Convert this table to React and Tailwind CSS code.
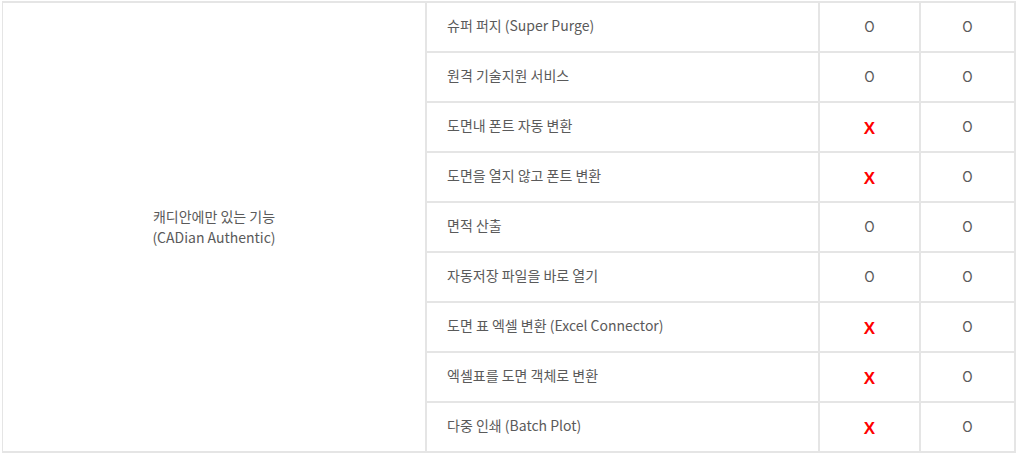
import React from "react";

const rows = [
  { name: "슈퍼 퍼지 (Super Purge)", cadian: true },
  { name: "원격 기술지원 서비스", cadian: true },
  { name: "도면내 폰트 자동 변환", cadian: false },
  { name: "도면을 열지 않고 폰트 변환", cadian: false },
  { name: "면적 산출", cadian: true },
  { name: "자동저장 파일을 바로 열기", cadian: true },
  { name: "도면 표 엑셀 변환 (Excel Connector)", cadian: false },
  { name: "엑셀표를 도면 객체로 변환", cadian: false },
  { name: "다중 인쇄 (Batch Plot)", cadian: false },
];

const Mark = ({ ok }) =>
  ok ? (
    <span className="text-[14px] text-[#5a5a5a] pb-[2px]">O</span>
  ) : (
    <span className="text-[17px] font-bold text-[#ff0000] pt-[3px] font-['Liberation_Sans',sans-serif]">X</span>
  );

export default function App() {
  return (
    <div className="bg-white w-[1016px] h-[454px] pt-[1px] pl-[2px] font-['Noto_Sans_CJK_KR',sans-serif] text-[#5a5a5a] text-[14px]">
      <div className="w-[1014px] bg-[#e5e5e5] pl-[1px] pt-[2px] pr-[2px] pb-[2px] grid grid-cols-[422px_391px_99px_93px] grid-rows-[repeat(9,48px)] gap-[2px]">
        <div className="row-span-9 bg-white flex flex-col items-center justify-center leading-[21px] text-center">
          <span>캐디안에만 있는 기능</span>
          <span>(CADian Authentic)</span>
        </div>
        {rows.map((r, i) => (
          <React.Fragment key={i}>
            <div className="bg-white flex items-center pl-[20px] pb-[3px]">{r.name}</div>
            <div className="bg-white flex items-center justify-center">
              <Mark ok={r.cadian} />
            </div>
            <div className="bg-white flex items-center justify-center">
              <Mark ok={true} />
            </div>
          </React.Fragment>
        ))}
      </div>
    </div>
  );
}
